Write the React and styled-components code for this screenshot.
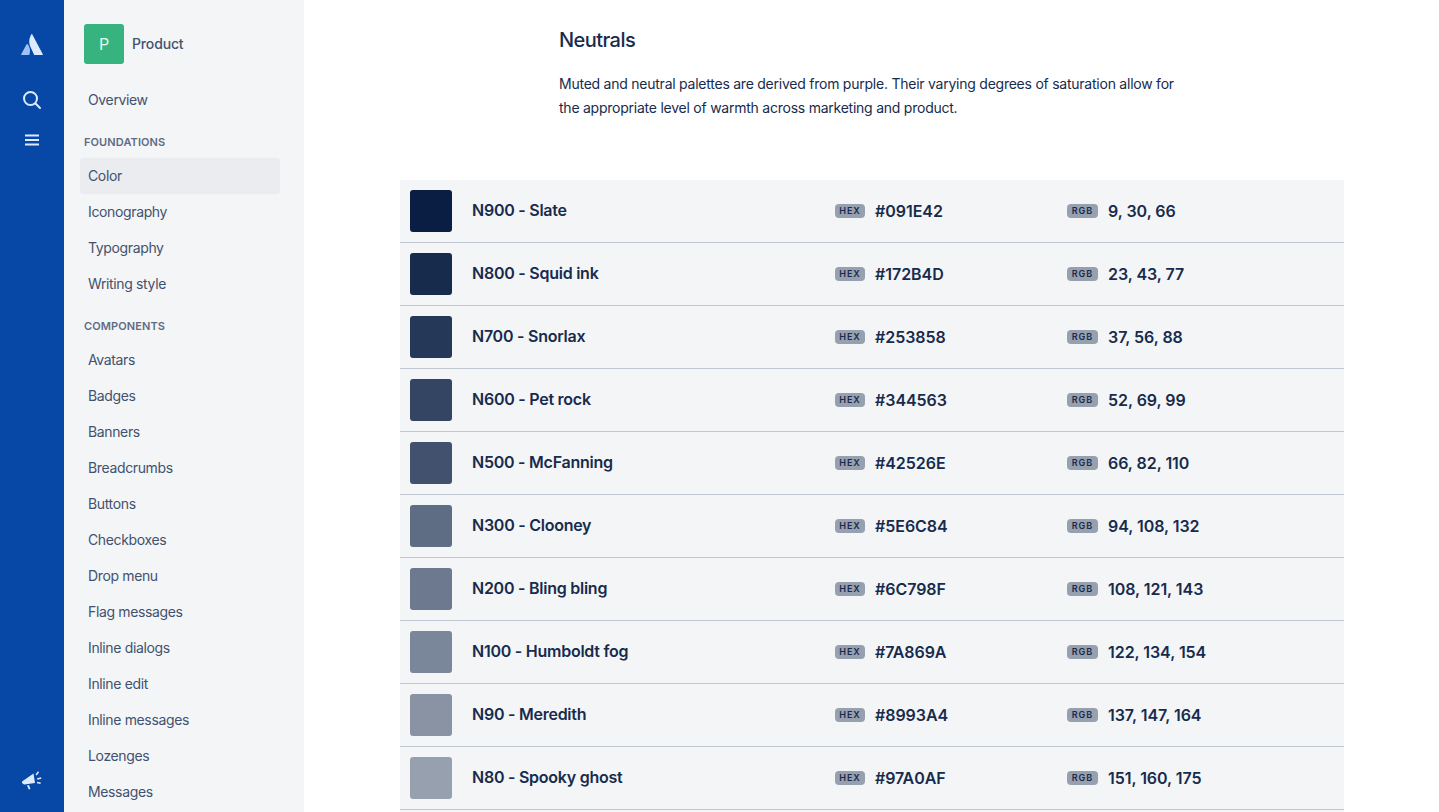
import React from "react";
import styled, { createGlobalStyle } from "styled-components";

const GlobalStyle = createGlobalStyle`
  html, body {
    margin: 0;
    padding: 0;
    height: 100%;
    overflow: hidden;
    background: #fff;
  }
  body {
    font-family: Inter, "Liberation Sans", sans-serif;
    color: #172b4d;
  }
  * {
    box-sizing: border-box;
  }
`;

const Page = styled.div`
  display: flex;
  width: 100%;
  height: 100vh;
  overflow: hidden;
`;

const GlobalNav = styled.nav`
  flex: 0 0 64px;
  display: flex;
  flex-direction: column;
  align-items: center;
  padding: 33px 0 22px;
  background: #0747a6;
`;
const NavIcon = styled.svg`
  display: block;
  margin-top: ${(p) => p.$top || 0}px;
`;
const NavSpacer = styled.div`
  flex: 1;
`;

const Sidebar = styled.aside`
  flex: 0 0 240px;
  height: 100%;
  padding: 24px 24px 0 16px;
  overflow: hidden;
  background: #f4f5f7;
`;
const Product = styled.div`
  display: flex;
  align-items: center;
  gap: 8px;
  height: 40px;
  margin: 0 0 18px 4px;
`;
const ProductMark = styled.div`
  display: flex;
  align-items: center;
  justify-content: center;
  width: 40px;
  height: 40px;
  border-radius: 3px;
  background: #36b37e;
  color: #e3fcef;
  font-size: 16px;
`;
const ProductName = styled.span`
  padding-bottom: 2px;
  font-size: 14px;
  font-weight: 500;
  letter-spacing: -0.15px;
  color: #42526e;
`;
const SectionLabel = styled.h4`
  margin: 16px 0 8px 4px;
  font-size: 11px;
  line-height: 16px;
  font-weight: 600;
  letter-spacing: 0.1px;
  color: #5e6c84;
`;
const NavItem = styled.div`
  display: flex;
  align-items: center;
  height: 36px;
  padding: 0 0 2px 8px;
  border-radius: 3px;
  font-size: 14px;
  letter-spacing: -0.36px;
  color: #42526e;
  background: ${(p) => (p.$active ? "#ebecf0" : "transparent")};
`;

const Main = styled.main`
  flex: 1;
  min-width: 0;
  padding: 0 95px 0 96px;
`;
const Intro = styled.section`
  width: 620px;
  height: 180px;
  margin-left: 159px;
  padding-top: 28px;
`;
const Heading = styled.h2`
  margin: 0 0 20px;
  font-size: 20px;
  line-height: 24px;
  font-weight: 500;
  letter-spacing: -0.55px;
  color: #172b4d;
`;
const Lead = styled.p`
  margin: 0;
  font-size: 14px;
  line-height: 24px;
  letter-spacing: -0.24px;
  color: #172b4d;
`;

const Palette = styled.div`
  background: #f4f5f7;
`;
const Row = styled.div`
  display: flex;
  align-items: center;
  height: 63px;
  padding: 0 10px;
  border-bottom: 1px solid #c1c7d0;
`;
const Swatch = styled.div`
  flex: 0 0 42px;
  height: 42px;
  border-radius: 3px;
  background: ${(p) => p.$color};
`;
const Name = styled.div`
  flex: 0 0 363px;
  margin-left: 20px;
  padding-bottom: 2px;
  font-size: 16px;
  font-weight: 600;
  letter-spacing: -0.25px;
  color: #172b4d;
`;
const Value = styled.div`
  display: flex;
  align-items: center;
  flex: 0 0 ${(p) => p.$width}px;
  gap: 10px;
  font-size: 16px;
  font-weight: 600;
  letter-spacing: -0.05px;
  color: #172b4d;
`;
const Tag = styled.span`
  display: block;
  width: ${(p) => p.$width}px;
  height: 14px;
  border-radius: 4px;
  background: #97a0af;
  font-size: 9px;
  line-height: 14px;
  font-weight: 600;
  letter-spacing: 1px;
  text-align: center;
  color: #172b4d;
`;

const foundations = ["Color", "Iconography", "Typography", "Writing style"];
const components = [
  "Avatars",
  "Badges",
  "Banners",
  "Breadcrumbs",
  "Buttons",
  "Checkboxes",
  "Drop menu",
  "Flag messages",
  "Inline dialogs",
  "Inline edit",
  "Inline messages",
  "Lozenges",
  "Messages",
];
const neutrals = [
  ["N900 - Slate", "#091E42", "9, 30, 66"],
  ["N800 - Squid ink", "#172B4D", "23, 43, 77"],
  ["N700 - Snorlax", "#253858", "37, 56, 88"],
  ["N600 - Pet rock", "#344563", "52, 69, 99"],
  ["N500 - McFanning", "#42526E", "66, 82, 110"],
  ["N300 - Clooney", "#5E6C84", "94, 108, 132"],
  ["N200 - Bling bling", "#6C798F", "108, 121, 143"],
  ["N100 - Humboldt fog", "#7A869A", "122, 134, 154"],
  ["N90 - Meredith", "#8993A4", "137, 147, 164"],
  ["N80 - Spooky ghost", "#97A0AF", "151, 160, 175"],
];

const App = () => (
  <Page>
    <GlobalStyle />
    <GlobalNav>
      <NavIcon width="22" height="22" viewBox="0 0 22 22">
        <path d="M6.4 11.1c-.2-.3-.6-.2-.8.1L.2 21.2c-.2.4.1.8.5.8h7.1c.2 0 .4-.1.5-.3 1.5-3.2.6-8-1.9-10.6z" fill="#9fc1f5" />
        <path d="M10.4 1.2C7.6 5.7 7.8 10.5 9.6 14.200l3.500 7.500c.1.200.3.300.5.300h7.700c.4 0 .7-.4.500-.8L11.200 1.200c-.2-.4-.6-.4-.8 0z" fill="#deebff" />
      </NavIcon>
      <NavIcon $top={35} width="20" height="20" viewBox="0 0 20 20" fill="none" stroke="#deebff" strokeWidth="2" strokeLinecap="round">
        <circle cx="8.500" cy="8.500" r="6.500" />
        <path d="M13.500 13.500l4.500 4.500" />
      </NavIcon>
      <NavIcon $top={24} width="16" height="12" viewBox="0 0 16 12" fill="none" stroke="#deebff" strokeWidth="2">
        <path d="M1 1.500h14M1 6h14M1 10.500h14" />
      </NavIcon>
      <NavSpacer />
      <NavIcon width="20" height="20" viewBox="0 0 20 20" fill="#deebff">
        <path d="M0 11.500 11.500 3.500 13 13 2.500 14.500c-1 0-2-.8-2.300-1.500z" />
        <path d="M5 15.500l2-.4 1.400 4-1.600.5zM13.500 4.500l2.400-3.200 1.200.9-2.400 3.200zM15 8.200l4-1 .4 1.500-4 1zM15.200 11.700l3.600.7-.3 1.500-3.600-.7z" />
      </NavIcon>
    </GlobalNav>
    <Sidebar>
      <Product>
        <ProductMark>P</ProductMark>
        <ProductName>Product</ProductName>
      </Product>
      <NavItem>Overview</NavItem>
      <SectionLabel>FOUNDATIONS</SectionLabel>
      {foundations.map((item) => (
        <NavItem key={item} $active={item === "Color"}>
          {item}
        </NavItem>
      ))}
      <SectionLabel>COMPONENTS</SectionLabel>
      {components.map((item) => (
        <NavItem key={item}>{item}</NavItem>
      ))}
    </Sidebar>
    <Main>
      <Intro>
        <Heading>Neutrals</Heading>
        <Lead>
          Muted and neutral palettes are derived from purple. Their varying degrees of saturation allow for
          the appropriate level of warmth across marketing and product.
        </Lead>
      </Intro>
      <Palette>
        {neutrals.map(([name, hex, rgb]) => (
          <Row key={name}>
            <Swatch $color={hex} />
            <Name>{name}</Name>
            <Value $width={232}>
              <Tag $width={30}>HEX</Tag>
              {hex}
            </Value>
            <Value $width={260}>
              <Tag $width={31}>RGB</Tag>
              {rgb}
            </Value>
          </Row>
        ))}
        <Row />
      </Palette>
    </Main>
  </Page>
);

export default App;
